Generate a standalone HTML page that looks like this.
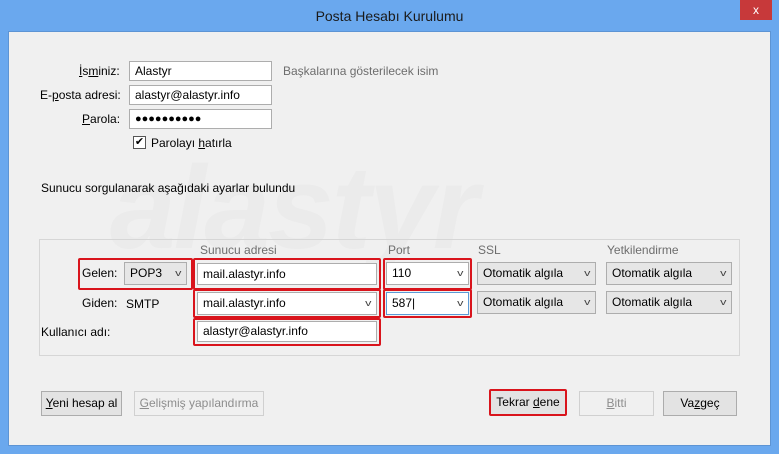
<!DOCTYPE html>
<html><head><meta charset="utf-8"><style>
*{box-sizing:border-box;margin:0;padding:0}
body{width:779px;height:454px;background:#6aa8ee;font-family:"Liberation Sans",sans-serif;font-size:12px;color:#000;position:relative;overflow:hidden}
.a{position:absolute;white-space:nowrap}
#title{left:0;top:0;width:779px;height:31px;line-height:32px;text-align:center;font-size:14px;color:#1b1b1b}
#close{left:740px;top:0;width:32px;height:20px;background:#c7393a;color:#fff;text-align:center;line-height:20px;font-size:12px}
#client{left:8px;top:31px;width:763px;height:415px;background:#f0f0f0;border:1px solid #5d94d4}
.lbl{line-height:14px}
.inp{background:#fff;border:1px solid #adadad;height:20px;line-height:18px;padding-left:5px}
.sel{background:#e6e6e6;border:1px solid #adadad;height:23px;line-height:21px;padding-left:5px}
.sel.w{background:#fff}
.arr{position:absolute;right:6px;top:0;font-size:9px;color:#444;transform:scaleX(1.4)}
.red{border:2px solid #d9141c;border-radius:2px}
.btn{background:#e3e3e3;border:1px solid #acacac;height:25px;line-height:23px;text-align:center}
.dis{color:#8d8d8d;background:#f0f0f0;border-color:#d0d0d0}
.gray{color:#6d6d6d}
u{text-decoration:underline}
</style></head><body>
<div class="a" id="title">Posta Hesabı Kurulumu</div>
<div class="a" id="close">x</div>
<div class="a" id="client"></div>
<div class="a" style="left:110px;top:140px;font-size:118px;font-weight:bold;font-style:italic;color:#ebebeb;letter-spacing:-2px">alastyr</div>

<div class="a lbl" style="left:79px;top:64px"><u>İ</u>s<u>m</u>iniz:</div>
<div class="a inp" style="left:129px;top:61px;width:143px">Alastyr</div>
<div class="a lbl gray" style="left:283px;top:64px">Başkalarına gösterilecek isim</div>
<div class="a lbl" style="left:40px;top:88px">E-<u>p</u>osta adresi:</div>
<div class="a inp" style="left:129px;top:85px;width:143px">alastyr@alastyr.info</div>
<div class="a lbl" style="left:82px;top:112px"><u>P</u>arola:</div>
<div class="a inp" style="left:129px;top:109px;width:143px;font-size:11px;letter-spacing:0px">●●●●●●●●●●</div>
<div class="a" style="left:133px;top:136px;width:13px;height:13px;border:1px solid #555;background:#fff;font-size:11px;line-height:11px;text-align:center">✔</div>
<div class="a lbl" style="left:151px;top:136px">Parolayı <u>h</u>atırla</div>
<div class="a lbl" style="left:41px;top:181px">Sunucu sorgulanarak aşağıdaki ayarlar bulundu</div>

<div class="a" style="left:39px;top:239px;width:701px;height:117px;border:1px solid #d6d6d6"></div>
<div class="a lbl gray" style="left:200px;top:243px">Sunucu adresi</div>
<div class="a lbl gray" style="left:388px;top:243px">Port</div>
<div class="a lbl gray" style="left:478px;top:243px">SSL</div>
<div class="a lbl gray" style="left:607px;top:243px">Yetkilendirme</div>

<div class="a red" style="left:78px;top:258px;width:115px;height:32px"></div>
<div class="a lbl" style="left:82px;top:266px">Gelen:</div>
<div class="a sel" style="left:124px;top:262px;width:63px">POP3<span class="arr">v</span></div>
<div class="a red" style="left:193px;top:258px;width:188px;height:32px"></div>
<div class="a inp" style="left:197px;top:263px;width:180px;height:22px;line-height:20px">mail.alastyr.info</div>
<div class="a red" style="left:383px;top:258px;width:89px;height:32px"></div>
<div class="a sel w" style="left:386px;top:262px;width:83px">110<span class="arr">v</span></div>
<div class="a sel" style="left:477px;top:262px;width:119px">Otomatik algıla<span class="arr">v</span></div>
<div class="a sel" style="left:606px;top:262px;width:126px">Otomatik algıla<span class="arr">v</span></div>

<div class="a lbl" style="left:82px;top:296px">Giden:</div>
<div class="a lbl" style="left:126px;top:297px">SMTP</div>
<div class="a red" style="left:193px;top:289px;width:188px;height:29px"></div>
<div class="a sel w" style="left:197px;top:292px;width:180px">mail.alastyr.info<span class="arr">v</span></div>
<div class="a red" style="left:383px;top:289px;width:89px;height:29px"></div>
<div class="a sel w" style="left:386px;top:292px;width:83px;border-color:#5b9ad6">587|<span class="arr">v</span></div>
<div class="a sel" style="left:477px;top:291px;width:119px">Otomatik algıla<span class="arr">v</span></div>
<div class="a sel" style="left:606px;top:291px;width:126px">Otomatik algıla<span class="arr">v</span></div>

<div class="a lbl" style="left:41px;top:325px">Kullanıcı adı:</div>
<div class="a red" style="left:193px;top:318px;width:188px;height:28px"></div>
<div class="a inp" style="left:197px;top:321px;width:180px;height:21px">alastyr@alastyr.info</div>

<div class="a btn" style="left:41px;top:391px;width:81px"><u>Y</u>eni hesap al</div>
<div class="a btn dis" style="left:134px;top:391px;width:130px"><u>G</u>elişmiş yapılandırma</div>
<div class="a red" style="left:489px;top:389px;width:78px;height:27px"></div>
<div class="a" style="left:491px;top:391px;width:74px;height:23px;line-height:23px;text-align:center;background:#e3e3e3">Tekrar <u>d</u>ene</div>
<div class="a btn dis" style="left:579px;top:391px;width:75px"><u>B</u>itti</div>
<div class="a btn" style="left:663px;top:391px;width:74px">Va<u>z</u>geç</div>
</body></html>
